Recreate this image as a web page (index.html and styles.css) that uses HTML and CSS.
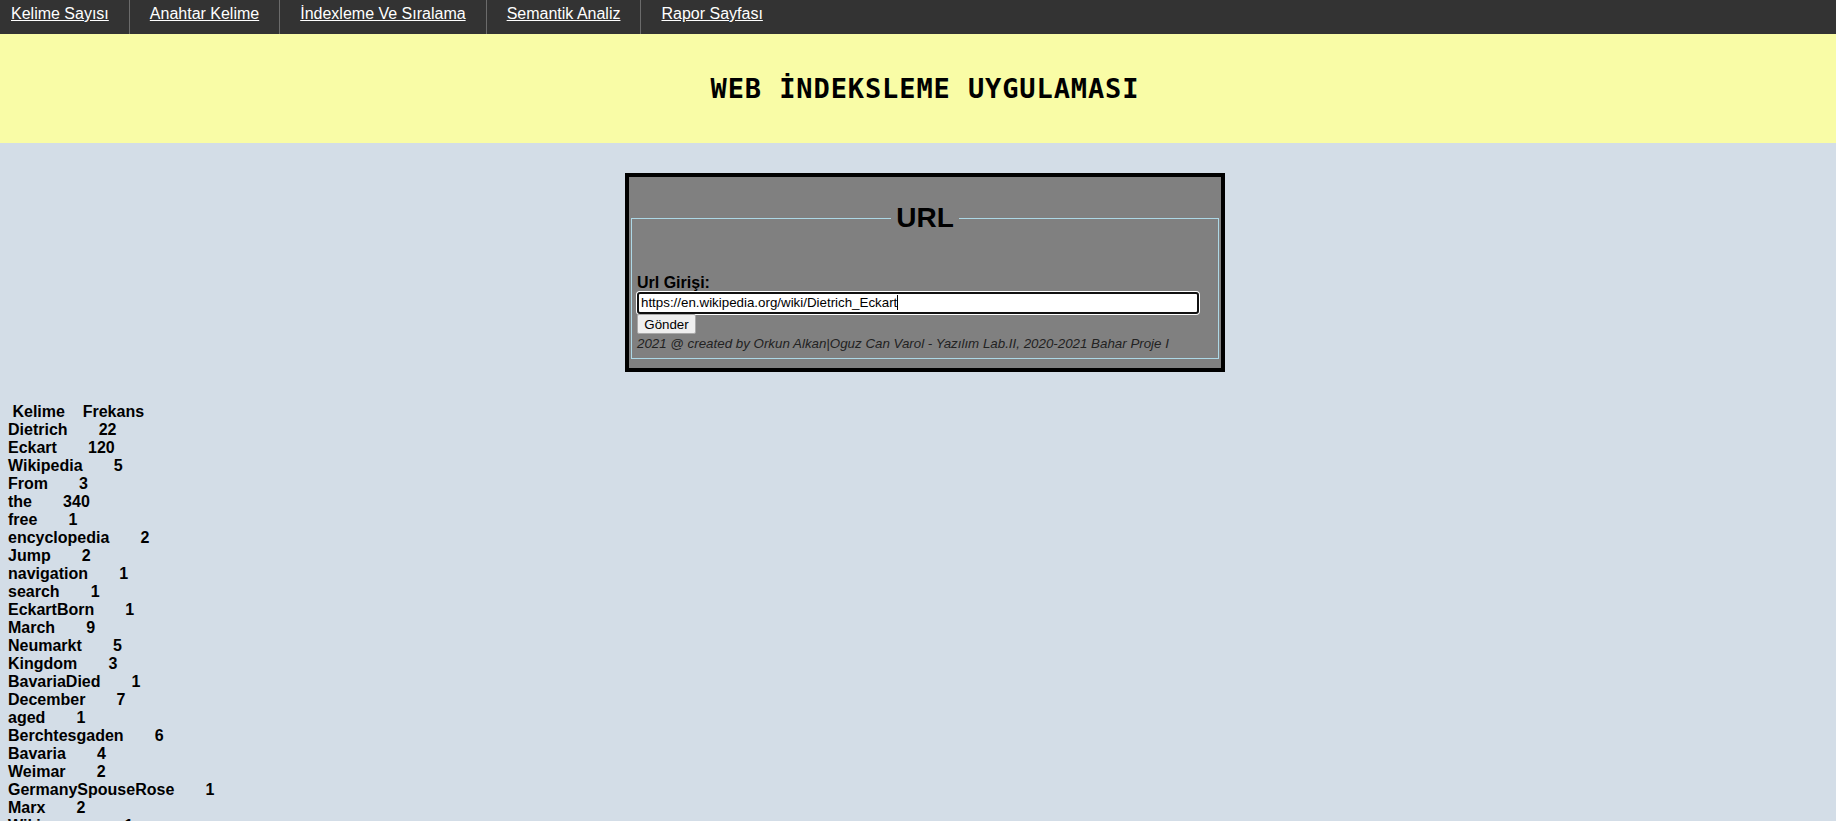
FILE: index.html
```html
<!DOCTYPE html>
<html lang="tr">
<head>
<meta charset="utf-8">
<title>Web İndeksleme Uygulaması</title>
<link rel="stylesheet" href="styles.css">
</head>
<body>
<nav class="topnav">
  <ul class="nav-list">
    <li class="nav-item"><a class="nav-link" href="#">Kelime Sayısı</a></li>
    <li class="nav-item"><a class="nav-link" href="#">Anahtar Kelime</a></li>
    <li class="nav-item"><a class="nav-link" href="#">İndexleme Ve Sıralama</a></li>
    <li class="nav-item"><a class="nav-link" href="#">Semantik Analiz</a></li>
    <li class="nav-item"><a class="nav-link" href="#">Rapor Sayfası</a></li>
  </ul>
</nav>
<header class="banner">
  <h1 class="banner-title">WEB İNDEKSLEME UYGULAMASI</h1>
</header>
<main class="main">
  <div class="url-box">
    <form class="url-form">
      <fieldset class="url-fieldset">
        <legend class="url-legend">URL</legend>
        <label class="url-label">Url Girişi:</label>
        <div class="url-input">https://en.wikipedia.org/wiki/Dietrich_Eckart<span class="caret"></span></div>
        <button class="send-btn" type="button">Gönder</button>
        <p class="credit">2021 @ created by Orkun Alkan|Oguz Can Varol - Yazılım Lab.II, 2020-2021 Bahar Proje I</p>
      </fieldset>
    </form>
  </div>
</main>
<section class="freq-list">
  <div class="freq-row">&nbsp;Kelime&nbsp;&nbsp;&nbsp;&nbsp;Frekans</div>
  <div class="freq-row">Dietrich&nbsp;&nbsp;&nbsp;&nbsp;&nbsp;&nbsp;&nbsp;22</div>
  <div class="freq-row">Eckart&nbsp;&nbsp;&nbsp;&nbsp;&nbsp;&nbsp;&nbsp;120</div>
  <div class="freq-row">Wikipedia&nbsp;&nbsp;&nbsp;&nbsp;&nbsp;&nbsp;&nbsp;5</div>
  <div class="freq-row">From&nbsp;&nbsp;&nbsp;&nbsp;&nbsp;&nbsp;&nbsp;3</div>
  <div class="freq-row">the&nbsp;&nbsp;&nbsp;&nbsp;&nbsp;&nbsp;&nbsp;340</div>
  <div class="freq-row">free&nbsp;&nbsp;&nbsp;&nbsp;&nbsp;&nbsp;&nbsp;1</div>
  <div class="freq-row">encyclopedia&nbsp;&nbsp;&nbsp;&nbsp;&nbsp;&nbsp;&nbsp;2</div>
  <div class="freq-row">Jump&nbsp;&nbsp;&nbsp;&nbsp;&nbsp;&nbsp;&nbsp;2</div>
  <div class="freq-row">navigation&nbsp;&nbsp;&nbsp;&nbsp;&nbsp;&nbsp;&nbsp;1</div>
  <div class="freq-row">search&nbsp;&nbsp;&nbsp;&nbsp;&nbsp;&nbsp;&nbsp;1</div>
  <div class="freq-row">EckartBorn&nbsp;&nbsp;&nbsp;&nbsp;&nbsp;&nbsp;&nbsp;1</div>
  <div class="freq-row">March&nbsp;&nbsp;&nbsp;&nbsp;&nbsp;&nbsp;&nbsp;9</div>
  <div class="freq-row">Neumarkt&nbsp;&nbsp;&nbsp;&nbsp;&nbsp;&nbsp;&nbsp;5</div>
  <div class="freq-row">Kingdom&nbsp;&nbsp;&nbsp;&nbsp;&nbsp;&nbsp;&nbsp;3</div>
  <div class="freq-row">BavariaDied&nbsp;&nbsp;&nbsp;&nbsp;&nbsp;&nbsp;&nbsp;1</div>
  <div class="freq-row">December&nbsp;&nbsp;&nbsp;&nbsp;&nbsp;&nbsp;&nbsp;7</div>
  <div class="freq-row">aged&nbsp;&nbsp;&nbsp;&nbsp;&nbsp;&nbsp;&nbsp;1</div>
  <div class="freq-row">Berchtesgaden&nbsp;&nbsp;&nbsp;&nbsp;&nbsp;&nbsp;&nbsp;6</div>
  <div class="freq-row">Bavaria&nbsp;&nbsp;&nbsp;&nbsp;&nbsp;&nbsp;&nbsp;4</div>
  <div class="freq-row">Weimar&nbsp;&nbsp;&nbsp;&nbsp;&nbsp;&nbsp;&nbsp;2</div>
  <div class="freq-row">GermanySpouseRose&nbsp;&nbsp;&nbsp;&nbsp;&nbsp;&nbsp;&nbsp;1</div>
  <div class="freq-row">Marx&nbsp;&nbsp;&nbsp;&nbsp;&nbsp;&nbsp;&nbsp;2</div>
  <div class="freq-row">Wikisource&nbsp;&nbsp;&nbsp;&nbsp;&nbsp;&nbsp;&nbsp;1</div>
</section>
</body>
</html>
```
FILE: styles.css
```css
html, body {
  margin: 0;
  padding: 0;
}

body {
  background: #d3dde7;
  font-family: "Liberation Sans", Arial, sans-serif;
  color: #000;
}

/* top navigation */
.topnav {
  background: #333333;
}

.nav-list {
  display: flex;
  list-style: none;
  margin: 0;
  padding: 0;
  height: 34px;
}

.nav-item {
  border-right: 1px solid #6b6b6b;
}

.nav-item:last-child {
  border-right: none;
}

.nav-link {
  display: block;
  color: #ffffff;
  font-size: 16px;
  line-height: 18px;
  padding: 5px 20px 11px;
  text-decoration: underline;
}

.nav-item:first-child .nav-link {
  padding-left: 11px;
}

/* banner */
.banner {
  background: #f9fca6;
  height: 109px;
  display: flex;
  align-items: center;
  justify-content: center;
  padding-left: 14px;
}

.banner-title {
  margin: 0;
  font-family: "DejaVu Sans Mono", monospace;
  font-size: 27px;
  font-weight: bold;
  letter-spacing: 0.9px;
  line-height: 34px;
  color: #000;
}

/* url form */
.main {
  padding: 30px 0 0 14px;
}

.url-box {
  width: 600px;
  box-sizing: border-box;
  margin: 0 auto;
  background: #808080;
  border: 4px solid #000;
  padding: 25px 0 9px;
}

.url-form {
  margin: 0;
}

.url-fieldset {
  margin: 0 2px;
  border: 1px solid #add8e6;
  padding: 40px 5px 7px;
}

.url-legend {
  margin: 0 auto;
  padding: 0 5px;
  font-size: 28px;
  font-weight: bold;
  line-height: 32px;
  color: #000;
}

.url-label {
  display: block;
  font-size: 16px;
  font-weight: bold;
  line-height: 18px;
}

.url-input {
  width: 562px;
  height: 22px;
  box-sizing: border-box;
  border: 2px solid #101010;
  border-radius: 3px;
  box-shadow: 0 0 0 1px #ffffff;
  background: #ffffff;
  font-size: 13.33px;
  line-height: 18px;
  padding: 0 2px;
  white-space: nowrap;
  color: #000;
}

.caret {
  display: inline-block;
  width: 1px;
  height: 15px;
  background: #000;
  vertical-align: -3px;
}

.send-btn {
  display: block;
  width: 59px;
  height: 20px;
  margin: 0;
  padding: 0;
  font-family: "Liberation Sans", Arial, sans-serif;
  font-size: 13.33px;
  color: #000;
  background: #efefef;
  border: 1px solid #a9a9a9;
  border-radius: 2px;
}

.credit {
  margin: 2px 0 0;
  font-size: 13.33px;
  line-height: 15px;
  font-style: italic;
  color: #222;
}

/* frequency list */
.freq-list {
  padding: 31px 0 0 8px;
  font-size: 16px;
  font-weight: bold;
  line-height: 18px;
}

.freq-row {
  white-space: nowrap;
}
```
